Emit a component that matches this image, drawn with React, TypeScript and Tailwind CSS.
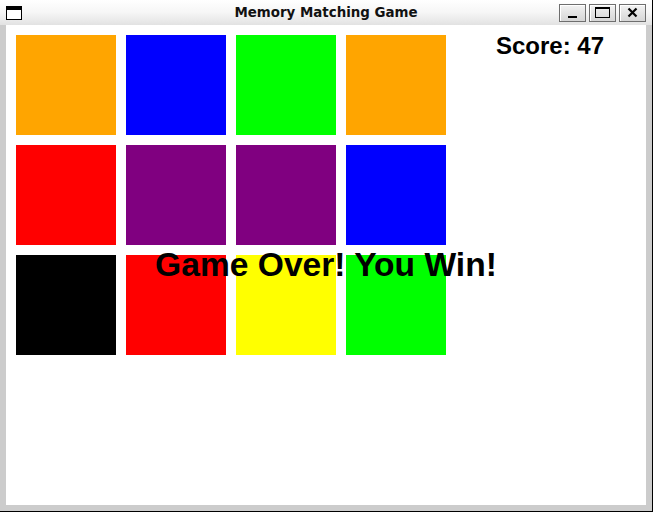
import React from 'react';

const tiles = [
  '#ffa500', '#0000ff', '#00ff00', '#ffa500',
  '#ff0000', '#800080', '#800080', '#0000ff',
  '#000000', '#ff0000', '#ffff00', '#00ff00',
];

const TitleButton = ({ children }: { children: React.ReactNode }) => (
  <div className="w-[27px] h-[18px] border border-[#6e6e6e] bg-gradient-to-b from-[#f2f2f2] to-[#d6d6d6] shadow-[inset_1px_1px_0_#ffffff] flex items-center justify-center">
    {children}
  </div>
);

export default function App() {
  return (
    <div className="w-[653px] h-[512px] bg-black overflow-hidden">
      <div className="w-[652px] h-[511px] bg-[#cccccc] flex flex-col">
        {/* title bar */}
        <div className="h-[25px] bg-gradient-to-b from-white via-[#f6f6f6] to-[#e2e2e2] flex items-center relative">
          <div className="ml-[6px] w-[16px] h-[14px] border border-black border-t-[4px] bg-white" />
          <div className="absolute inset-x-0 top-0 h-[25px] flex items-center justify-center pointer-events-none">
            <span className="font-['DejaVu_Sans',sans-serif] font-bold text-[13.4px] text-[#111111] leading-none">
              Memory Matching Game
            </span>
          </div>
          <div className="ml-auto mr-[6px] flex gap-[3px]">
            <TitleButton>
              <div className="w-[9px] h-[2px] bg-black mt-[8px]" />
            </TitleButton>
            <TitleButton>
              <div className="w-[15px] h-[11px] border border-black border-t-[2px]" />
            </TitleButton>
            <TitleButton>
              <svg width="11" height="11" viewBox="0 0 11 11">
                <path d="M1.5 1.5 L9.5 9.5 M9.5 1.5 L1.5 9.5" stroke="black" strokeWidth="2.2" />
              </svg>
            </TitleButton>
          </div>
        </div>

        {/* client area */}
        <div className="flex-1 px-[6px] pb-[6px]">
          <div className="relative w-[640px] h-[480px] bg-white p-[10px] flex font-['Liberation_Sans',Arial,sans-serif]">
            <div className="grid grid-cols-[repeat(4,100px)] gap-[10px] h-fit">
              {tiles.map((c, i) => (
                <div key={i} className="w-[100px] h-[100px]" style={{ backgroundColor: c }} />
              ))}
            </div>
            <div className="ml-[50px] -mt-px text-[24px] font-bold leading-none text-black">Score: 47</div>
            <div className="absolute inset-0 flex items-center justify-center">
              <span className="text-[33.6px] font-bold leading-none text-black">Game Over! You Win!</span>
            </div>
          </div>
        </div>
      </div>
    </div>
  );
}
